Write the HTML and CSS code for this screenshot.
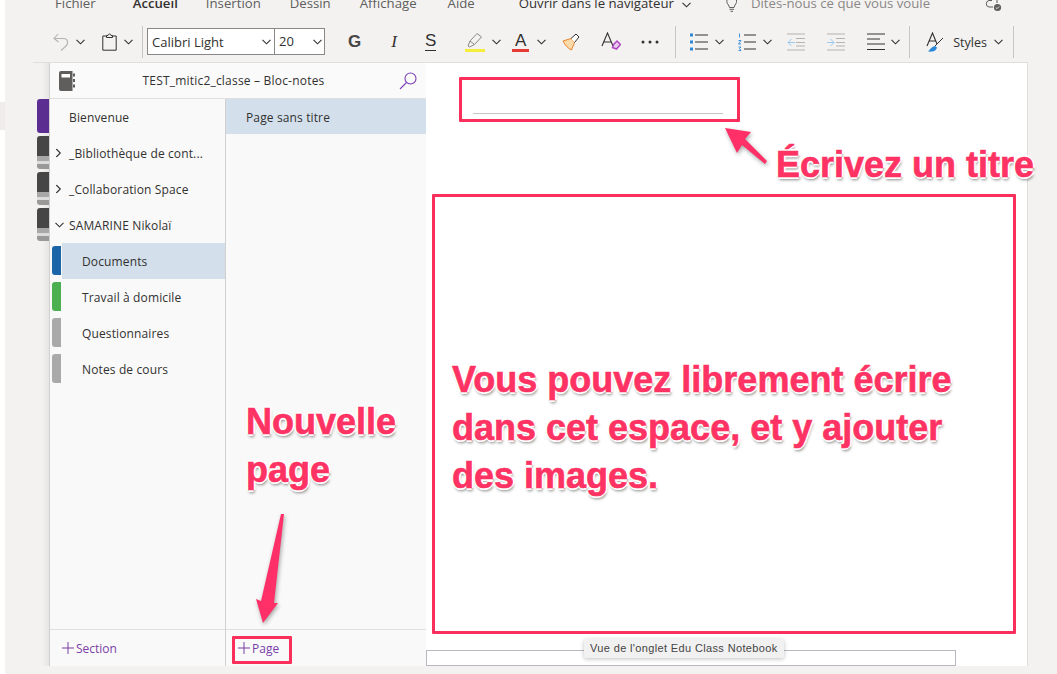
FILE: index.html
```html
<!DOCTYPE html>
<html lang="fr">
<head>
    <meta charset="UTF-8">
    <title>TEST_mitic2_classe - Bloc-notes</title>
    <link rel="stylesheet" href="styles.css">
</head>
<body>
    <svg class="defs" width="0" height="0">
        <symbol id="chev" viewBox="0 0 9 6"><path d="M.5 .8 4.5 4.8 8.5 .8" fill="none" stroke="currentColor" stroke-width="1.1"/></symbol>
    </svg>

    <div class="edge-patch"></div>

    <div class="app">
        <nav class="menu">
            <span class="m-fichier">Fichier</span>
            <span class="m-accueil">Accueil</span>
            <span class="m-insertion">Insertion</span>
            <span class="m-dessin">Dessin</span>
            <span class="m-affichage">Affichage</span>
            <span class="m-aide">Aide</span>
            <span class="m-ouvrir">Ouvrir dans le navigateur</span>
            <svg class="chev m-chev"><use href="#chev"/></svg>
            <svg class="m-bulb" width="15" height="14" viewBox="0 0 15 14"><path d="M4.500 7C3 5.500 2.600 4 3 1.500M11 7C12.400 5.500 12.800 4 12.400 1.500M4.500 7 5.500 9.500H10L11 7M5.500 11.300H10M6.500 13.300H9" fill="none" stroke="#605e5c" stroke-width="1"/></svg>
            <span class="m-tell">Dites-nous ce que vous voule</span>
            <svg class="m-sync" width="18" height="14" viewBox="0 0 18 14"><path d="M8 1.500H5A3.300 3.300 0 0 0 5 8H9" fill="none" stroke="#605e5c"/><path d="M13 0V4" stroke="#605e5c" fill="none"/><circle cx="13.500" cy="8.500" r="3.600" fill="#605e5c"/><path d="M11.800 8.500 13 9.700 15.200 7.500" fill="none" stroke="#fff" stroke-width=".8"/></svg>
        </nav>

        <div class="toolbar">
            <svg class="t-undo" width="16" height="18" viewBox="0 0 16 18"><path d="M5 1 1 5.500 5.500 9M1.500 5.500H10.500C15 5.500 16 10.500 12.500 13.500L8 17.500" fill="none" stroke="#b5b3b1" stroke-width="1.100"/></svg>
            <svg class="chev t-sub"><use href="#chev"/></svg>
            <svg class="t-clip" width="15" height="18" viewBox="0 0 15 18"><path d="M4.500 3H.8V17.200H14.200V3H10.500M4.500 4.500V2.500H6C6 .5 9 .5 9 2.500H10.500V4.500Z" fill="none" stroke="#323130" stroke-width="1"/></svg>
            <svg class="chev t-sub"><use href="#chev"/></svg>
            <i class="divider t-div1"></i>
            <div class="fontbox">
                <span class="fontname">Calibri Light</span>
                <svg class="chev"><use href="#chev"/></svg>
                <span class="fontsize">20</span>
                <svg class="chev"><use href="#chev"/></svg>
            </div>
            <span class="t-bold">G</span>
            <span class="t-italic">I</span>
            <span class="t-strike">S</span>
            <svg class="t-marker" width="20" height="20" viewBox="0 0 20 20"><path d="M3 14 5 9 12 1.500 16.500 5 9.500 12.500 4.500 15ZM5 9 9.500 12.500" fill="none" stroke="#8a8886" stroke-width="1"/><rect y="17" width="20" height="3" fill="#f6ee3d"/></svg>
            <svg class="chev t-sub"><use href="#chev"/></svg>
            <span class="t-color">A</span>
            <svg class="chev t-color-chev"><use href="#chev"/></svg>
            <svg class="t-brush" width="18" height="18" viewBox="0 0 18 18"><path d="M1 8 9 5.500 12.500 9.500 9.500 17C6 15.500 3 12 1 8Z" fill="#fbd9a8" stroke="#e8842c"/><path d="M9 5.500 14 1 17 4 12.500 9.500" fill="#fff" stroke="#323130"/></svg>
            <svg class="t-clear" width="20" height="20" viewBox="0 0 20 20"><path d="M1 14 6.500 1 12 14M3 10H10" fill="none" stroke="#323130" stroke-width="1.100"/><path d="M13 12 16 9 19.500 12.500 15.500 17 11.500 15.500Z" fill="#e9cdf0" stroke="#b146c2" stroke-width="1.500"/></svg>
            <svg class="t-more" width="18" height="4" viewBox="0 0 18 4"><circle cx="2" cy="2" r="1.500" fill="#323130"/><circle cx="9" cy="2" r="1.500" fill="#323130"/><circle cx="16" cy="2" r="1.500" fill="#323130"/></svg>
            <i class="divider t-div2"></i>
            <svg class="t-bullets" width="18" height="18" viewBox="0 0 18 18"><path d="M5 2H18M5 9H18M5 16H18" stroke="#323130"/><path d="M0 .5H3V3.500H0ZM0 7.500H3V10.500H0ZM0 14.500H3V17.500H0Z" fill="#2b88d8"/></svg>
            <svg class="chev t-sub"><use href="#chev"/></svg>
            <svg class="t-numbers" width="18" height="18" viewBox="0 0 18 18"><path d="M6 2H18M6 9H18M6 16H18" stroke="#323130"/><path d="M1.500 .5V4.500M.5 7.500H3L.5 11H3M.5 14H3L1.500 15.500 3 17.500H.5" fill="none" stroke="#2b88d8" stroke-width=".9"/></svg>
            <svg class="chev t-sub"><use href="#chev"/></svg>
            <svg class="t-outdent" width="18" height="18" viewBox="0 0 18 18"><path d="M0 1H18M9 5.500H18M9 9.500H18M9 13H18M0 17H18" stroke="#b5b3b1"/><path d="M8 9.500H1M4.500 6 1 9.500 4.500 13" fill="none" stroke="#9dc9ec"/></svg>
            <svg class="t-indent" width="18" height="18" viewBox="0 0 18 18"><path d="M0 1H18M9 5.500H18M9 9.500H18M9 13H18M0 17H18" stroke="#b5b3b1"/><path d="M0 9.500H7M3.500 6 7 9.500 3.500 13" fill="none" stroke="#9dc9ec"/></svg>
            <svg class="t-align" width="18" height="18" viewBox="0 0 18 18"><path d="M0 1H18M0 6H13M0 11H18M0 16.500H18" stroke="#323130"/></svg>
            <svg class="chev t-align-chev"><use href="#chev"/></svg>
            <i class="divider t-div3"></i>
            <svg class="t-styles" width="18" height="20" viewBox="0 0 18 20"><path d="M1 14 6.500 1 11 12M3 9H9.500" fill="none" stroke="#323130" stroke-width="1.100"/><path d="M17 6 9 14" stroke="#323130"/><path d="M9 14C5 15 4 18 2 19.500 6 20 10 19.500 11 15.500Z" fill="#2b88d8"/></svg>
            <span class="t-styles-label">Styles</span>
            <svg class="chev t-sub"><use href="#chev"/></svg>
            <i class="divider t-div4"></i>
        </div>

        <div class="workspace">
            <div class="tabstrip">
                <i class="nb-tab nb-active"></i>
                <i class="nb-tab"></i>
                <i class="nb-tab"></i>
                <i class="nb-tab"></i>
            </div>

            <div class="pane">
                <header class="pane-head">
                    <svg class="nb-icon" width="17" height="20" viewBox="0 0 17 20"><path d="M2 0H13.500V20H2A2 2 0 0 1 0 18V2A2 2 0 0 1 2 0Z" fill="#605e5c"/><rect x="2.500" y="3" width="8.500" height="3.500" fill="#fff"/><path d="M15 2.500V5.500M15 8V11M15 13.500V16.500" stroke="#605e5c" stroke-width="2"/></svg>
                    <span class="pane-title">TEST_mitic2_classe – Bloc-notes</span>
                    <svg class="search" width="18" height="18" viewBox="0 0 18 18"><circle cx="11.500" cy="6.500" r="5.500" fill="none" stroke="#7b3fb5" stroke-width="1.100"/><path d="M7.500 10.500 1 17" stroke="#7b3fb5" stroke-width="1.100"/></svg>
                </header>
                <div class="columns">
                    <div class="sections">
                        <ul class="list">
                            <li class="row group-row">Bienvenue</li>
                            <li class="row group-row"><svg class="chev side"><use href="#chev"/></svg>_Bibliothèque de cont...</li>
                            <li class="row group-row"><svg class="chev side"><use href="#chev"/></svg>_Collaboration Space</li>
                            <li class="row group-row"><svg class="chev open"><use href="#chev"/></svg>SAMARINE Nikolaï</li>
                            <li class="row sec-row"><i class="sec-tab blue"></i><span class="sec-label selected">Documents</span></li>
                            <li class="row sec-row"><i class="sec-tab green"></i><span class="sec-label">Travail à domicile</span></li>
                            <li class="row sec-row"><i class="sec-tab gray"></i><span class="sec-label">Questionnaires</span></li>
                            <li class="row sec-row"><i class="sec-tab gray"></i><span class="sec-label">Notes de cours</span></li>
                        </ul>
                        <footer class="add-row add-section">
                            <svg width="12" height="12" viewBox="0 0 12 12"><path d="M6 0V12M0 6H12" stroke="currentColor"/></svg>
                            Section
                        </footer>
                    </div>
                    <div class="pages">
                        <ul class="list">
                            <li class="row page-row selected">Page sans titre</li>
                        </ul>
                        <footer class="add-row add-page">
                            <svg width="12" height="12" viewBox="0 0 12 12"><path d="M6 0V12M0 6H12" stroke="currentColor"/></svg>
                            Page
                        </footer>
                    </div>
                </div>
            </div>

            <main class="canvas">
                <div class="title-line"></div>
                <div class="tab-box"></div>
                <div class="tooltip">Vue de l'onglet Edu Class Notebook</div>
            </main>
        </div>
    </div>

    <!-- annotations on top of the screenshot -->
    <div class="box box-title"></div>
    <div class="box box-body"></div>
    <div class="box box-page"></div>
    <svg class="arrows" width="1057" height="674" viewBox="0 0 1057 674">
        <polygon points="725,128 751,132 745,139 767,161 765,164 742,145 737,153"/>
        <polygon points="281,514 284,514 274,603 278,603 263,623 256,599 261,601"/>
    </svg>
    <div class="note note-title">Écrivez un titre</div>
    <div class="note note-body">Vous pouvez librement écrire<br>dans cet espace, et y ajouter<br>des images.</div>
    <div class="note note-page">Nouvelle<br>page</div>
</body>
</html>
```

FILE: styles.css
```css
body {
    margin: 0;
    background-color: #fff;
    color: #323130;
    font-family: "Open Sans", "Noto Sans", sans-serif;
    font-size: 12px;
    overflow: hidden;
}

ul {
    list-style: none;
    margin: 0;
    padding: 0;
}

.defs {
    position: absolute;
}

.edge-patch {
    position: absolute;
    left: 0;
    top: 102px;
    width: 5px;
    height: 28px;
    background-color: #efece9;
}

.chev {
    width: 9px;
    height: 6px;
    color: #323130;
    flex: none;
}

.app {
    margin-left: 5px;
    height: 674px;
    background-color: #f3f2f1;
    display: flex;
    flex-direction: column;
}

/* menu, cut by the top of the window */
.menu {
    height: 22px;
    display: flex;
    align-items: flex-start;
    font-size: 13.2px;
    line-height: 14px;
    overflow: hidden;
}

.menu span {
    margin-top: -4px;
    flex: none;
}

.m-fichier { margin-left: 50px; color: #605e5c; }
.m-accueil { margin-left: 37px; font-weight: 600; }
.m-insertion { margin-left: 28px; color: #605e5c; }
.m-dessin { margin-left: 29px; color: #605e5c; }
.m-affichage { margin-left: 29px; color: #605e5c; }
.m-aide { margin-left: 31px; color: #605e5c; }
.m-ouvrir { margin-left: 44px; }
.m-chev { margin-left: 8px; margin-top: 2px; }
.m-bulb { margin-left: 33px; margin-top: -2px; flex: none; }
.m-tell { margin-left: 12px; color: #8a8886; }
.m-sync { margin-left: 54px; margin-top: -1px; flex: none; }

.toolbar {
    height: 40px;
    display: flex;
    align-items: center;
    box-sizing: border-box;
    padding-bottom: 1px;
}

.toolbar svg {
    flex: none;
}

.divider {
    width: 1px;
    height: 32px;
    background-color: #c8c6c4;
    flex: none;
}

.t-undo { margin-left: 48px; }
.t-sub { margin-left: 7px; }
.t-clip { margin-left: 17px; }
.t-div1 { margin-left: 9px; }

.fontbox {
    margin-left: 4px;
    width: 178px;
    height: 27px;
    box-sizing: border-box;
    border: 1px solid #8a8886;
    background-color: #fff;
    display: flex;
    align-items: center;
    font-size: 13px;
    flex: none;
}

.fontname {
    width: 114px;
    padding-left: 4px;
    box-sizing: border-box;
}

.fontsize {
    margin-left: 3px;
    border-left: 1px solid #8a8886;
    height: 25px;
    line-height: 25px;
    padding-left: 4px;
    width: 34px;
}

.t-bold, .t-italic, .t-strike, .t-color {
    flex: none;
    font-family: "Liberation Sans", sans-serif;
    font-size: 17px;
    line-height: 20px;
}

.t-bold { margin-left: 23px; font-weight: 700; color: #484644; }
.t-italic { margin-left: 30px; font-family: "Liberation Serif", serif; font-style: italic; }
.t-strike { margin-left: 28px; border-bottom: 1px solid #323130; line-height: 18px; }
.t-marker { margin-left: 29px; }
.t-color { margin-left: 11px; width: 17px; text-align: center; border-bottom: 3px solid #e83a35; line-height: 17px; }
.t-color-chev { margin-left: 8px; }
.t-brush { margin-left: 16px; }
.t-clear { margin-left: 21px; }
.t-more { margin-left: 20px; }
.t-div2 { margin-left: 16px; }
.t-bullets { margin-left: 14px; }
.t-numbers { margin-left: 14px; }
.t-outdent { margin-left: 15px; }
.t-indent { margin-left: 22px; }
.t-align { margin-left: 22px; }
.t-align-chev { margin-left: 6px; }
.t-div3 { margin-left: 9px; }
.t-styles { margin-left: 16px; }
.t-styles-label { margin: 1px 0 0 9px; font-size: 12.5px; flex: none; }
.t-div4 { margin-left: 10px; }

.workspace {
    height: 604px;
    margin-left: 28px;
    width: 995px;
    display: flex;
    border-top: 1px solid #e1dfdd;
    box-sizing: border-box;
}

.tabstrip {
    width: 16px;
    flex: none;
    padding-top: 36px;
    box-sizing: border-box;
    background: linear-gradient(to right, #f3f2f1, #f3f2f1 55%, #e6e5e4);
    display: flex;
    flex-direction: column;
    align-items: flex-end;
    gap: 3px;
}

.nb-tab {
    width: 12px;
    height: 33px;
    border-radius: 3px 0 0 3px;
    background: linear-gradient(to bottom, #464646 0, #464646 60%, #a8a8a8 60%, #a8a8a8 76%, #dcdcdc 76%, #dcdcdc 84%, #999 84%, #999 100%);
}

.nb-active {
    height: 34px;
    background: #5c2d91;
}

.pane {
    width: 377px;
    flex: none;
    background-color: #f9f9f9;
    border-left: 1px solid #d2d0ce;
    box-sizing: border-box;
    display: flex;
    flex-direction: column;
}

.pane-head {
    height: 36px;
    flex: none;
    box-sizing: border-box;
    border-bottom: 1px solid #e1dfdd;
    display: flex;
    align-items: center;
    padding: 0 9px 0 9px;
    background-color: #fafafa;
}

.pane-title {
    flex: 1;
    text-align: center;
    padding-right: 8px;
    letter-spacing: 0.2px;
}

.columns {
    flex: 1;
    display: flex;
    min-height: 0;
}

.sections {
    width: 176px;
    border-right: 1px solid #d2d0ce;
    box-sizing: border-box;
    display: flex;
    flex-direction: column;
}

.pages {
    flex: 1;
    display: flex;
    flex-direction: column;
}

.list {
    flex: 1;
    letter-spacing: 0.13px;
}

.row {
    height: 36px;
    display: flex;
    align-items: center;
}

.group-row {
    position: relative;
    padding-left: 19px;
}

.chev.side {
    position: absolute;
    left: 4px;
    top: 15px;
    transform: rotate(-90deg);
}

.chev.open {
    position: absolute;
    left: 5px;
    top: 15px;
}

.sec-row {
    padding-left: 2px;
    align-items: stretch;
}

.sec-tab {
    width: 9px;
    height: 29px;
    margin: 3px 1px 0 0;
    border-radius: 3px 0 0 3px;
    flex: none;
}

.blue { background-color: #1b64a8; }
.green { background-color: #4caf50; }
.gray { background-color: #a9a9a9; }

.sec-label {
    flex: 1;
    display: flex;
    align-items: center;
    padding-left: 20px;
}

.selected {
    background-color: #d3e0ec;
}

.page-row {
    height: 35px;
    box-sizing: border-box;
    padding: 1px 0 0 20px;
}

.add-row {
    height: 37px;
    flex: none;
    box-sizing: border-box;
    border-top: 1px solid #e1dfdd;
    display: flex;
    align-items: center;
    gap: 2px;
    color: #7a3ea8;
}

.add-section { padding-left: 12px; }
.add-page { padding-left: 12px; }

.canvas {
    flex: 1;
    background-color: #fff;
    border-right: 1px solid #e1dfdd;
    position: relative;
    display: flex;
    flex-direction: column;
}

.title-line {
    margin: 50px 0 0 47px;
    width: 250px;
    height: 1px;
    background-color: #c8c6c4;
}

.tab-box {
    margin-top: auto;
    width: 530px;
    height: 16px;
    box-sizing: border-box;
    border: 1px solid #b9b8c0;
}

.tooltip {
    position: absolute;
    left: 158px;
    bottom: 8px;
    height: 19px;
    line-height: 19px;
    padding: 0 6px;
    background-color: #f1f1f1;
    border-radius: 2px;
    box-shadow: 0 1px 4px rgba(0, 0, 0, 0.25);
    font-family: "Liberation Sans", sans-serif;
    font-size: 11px;
    letter-spacing: 0.36px;
    color: #444;
    white-space: nowrap;
}

/* annotations */
.box {
    position: absolute;
    box-sizing: border-box;
    border: 3px solid #fb2f5c;
    border-radius: 1px;
}

.box-title { left: 459px; top: 77px; width: 281px; height: 45px; }
.box-body { left: 432px; top: 194px; width: 584px; height: 440px; }
.box-page { left: 232px; top: 636px; width: 60px; height: 28px; }

.arrows {
    position: absolute;
    left: 0;
    top: 0;
    filter: drop-shadow(1px 2px 2px rgba(0, 0, 0, 0.35));
}

.arrows polygon {
    fill: #ff2f68;
}

.note {
    position: absolute;
    font-family: "Liberation Sans", sans-serif;
    font-weight: 700;
    color: #fe3363;
    white-space: nowrap;
    -webkit-text-stroke: 0.6px #fe3363;
    text-shadow: 2px 0 0 #fff, -2px 0 0 #fff, 0 2px 0 #fff, 0 -2px 0 #fff, 1px 3px 3px rgba(0, 0, 0, 0.45);
}

.note-title { left: 776px; top: 145px; font-size: 36px; line-height: 40px; }
.note-body { left: 452px; top: 356px; font-size: 36px; line-height: 48px; }
.note-page { left: 246px; top: 398px; font-size: 36px; line-height: 48px; }
```
